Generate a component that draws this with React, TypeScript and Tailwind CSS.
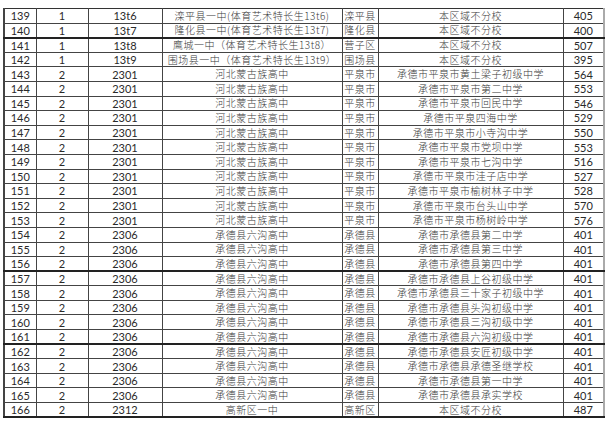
const rows: [string, string, string, string, string, string, string][] = [
  ["139", "1", "13t6", "滦平县一中(体育艺术特长生13t6)", "滦平县", "本区域不分校", "405"],
  ["140", "1", "13t7", "隆化县一中(体育艺术特长生13t7)", "隆化县", "本区域不分校", "400"],
  ["141", "1", "13t8", "鹰城一中（体育艺术特长生13t8）", "营子区", "本区域不分校", "507"],
  ["142", "1", "13t9", "围场县一中（体育艺术特长生13t9）", "围场县", "本区域不分校", "395"],
  ["143", "2", "2301", "河北蒙古族高中", "平泉市", "承德市平泉市黄土梁子初级中学", "564"],
  ["144", "2", "2301", "河北蒙古族高中", "平泉市", "承德市平泉市第二中学", "553"],
  ["145", "2", "2301", "河北蒙古族高中", "平泉市", "承德市平泉市回民中学", "546"],
  ["146", "2", "2301", "河北蒙古族高中", "平泉市", "承德市平泉四海中学", "529"],
  ["147", "2", "2301", "河北蒙古族高中", "平泉市", "承德市平泉市小寺沟中学", "550"],
  ["148", "2", "2301", "河北蒙古族高中", "平泉市", "承德市平泉市党坝中学", "553"],
  ["149", "2", "2301", "河北蒙古族高中", "平泉市", "承德市平泉市七沟中学", "516"],
  ["150", "2", "2301", "河北蒙古族高中", "平泉市", "承德市平泉市洼子店中学", "527"],
  ["151", "2", "2301", "河北蒙古族高中", "平泉市", "承德市平泉市榆树林子中学", "528"],
  ["152", "2", "2301", "河北蒙古族高中", "平泉市", "承德市平泉市台头山中学", "570"],
  ["153", "2", "2301", "河北蒙古族高中", "平泉市", "承德市平泉市杨树岭中学", "576"],
  ["154", "2", "2306", "承德县六沟高中", "承德县", "承德市承德县第二中学", "401"],
  ["155", "2", "2306", "承德县六沟高中", "承德县", "承德市承德县第三中学", "401"],
  ["156", "2", "2306", "承德县六沟高中", "承德县", "承德市承德县第四中学", "401"],
  ["157", "2", "2306", "承德县六沟高中", "承德县", "承德市承德县上谷初级中学", "401"],
  ["158", "2", "2306", "承德县六沟高中", "承德县", "承德市承德县三十家子初级中学", "401"],
  ["159", "2", "2306", "承德县六沟高中", "承德县", "承德市承德县头沟初级中学", "401"],
  ["160", "2", "2306", "承德县六沟高中", "承德县", "承德市承德县三沟初级中学", "401"],
  ["161", "2", "2306", "承德县六沟高中", "承德县", "承德市承德县六沟初级中学", "401"],
  ["162", "2", "2306", "承德县六沟高中", "承德县", "承德市承德县安匠初级中学", "401"],
  ["163", "2", "2306", "承德县六沟高中", "承德县", "承德市承德县承德圣继学校", "401"],
  ["164", "2", "2306", "承德县六沟高中", "承德县", "承德市承德县第一中学", "401"],
  ["165", "2", "2306", "承德县六沟高中", "承德县", "承德市承德县承实学校", "401"],
  ["166", "2", "2312", "高新区一中", "高新区", "本区域不分校", "487"],
];

// rows whose bottom rule prints heavier in the scan
const heavy = new Set(["140", "156", "161", "166"]);

const num = "font-['Lato','Liberation_Sans',sans-serif] text-[11px] text-[#2a2a2a]";
const zh = "font-['Noto_Sans_CJK_SC',sans-serif] text-[10px] font-light text-[#3a3a3a] tracking-[0.5px]";

export default function App() {
  return (
    <div className="w-[607px] h-[422px] bg-white pt-2 pl-[3px] overflow-hidden">
      <table className="table-fixed border-collapse w-[600px] border-l-2 border-l-[#444] border-t border-t-[#333] border-r-2 border-r-[#aaa]">
        <colgroup>
          <col className="w-[32px]" />
          <col className="w-[52px]" />
          <col className="w-[74px]" />
          <col className="w-[180px]" />
          <col className="w-[36px]" />
          <col className="w-[185px]" />
          <col className="w-[41px]" />
        </colgroup>
        <tbody>
          {rows.map((r) => (
            <tr
              key={r[0]}
              className={
                heavy.has(r[0])
                  ? "h-[14.6px] border-b-2 border-b-[#222]"
                  : "h-[14.6px] border-b border-b-[#444]"
              }
            >
              {r.map((c, i) => (
                <td
                  key={i}
                  className={`p-0 leading-none text-center whitespace-nowrap overflow-hidden border-r border-r-[#444] ${
                    i >= 3 && i <= 5 ? zh : num
                  }`}
                >
                  {c}
                </td>
              ))}
            </tr>
          ))}
        </tbody>
      </table>
    </div>
  );
}
